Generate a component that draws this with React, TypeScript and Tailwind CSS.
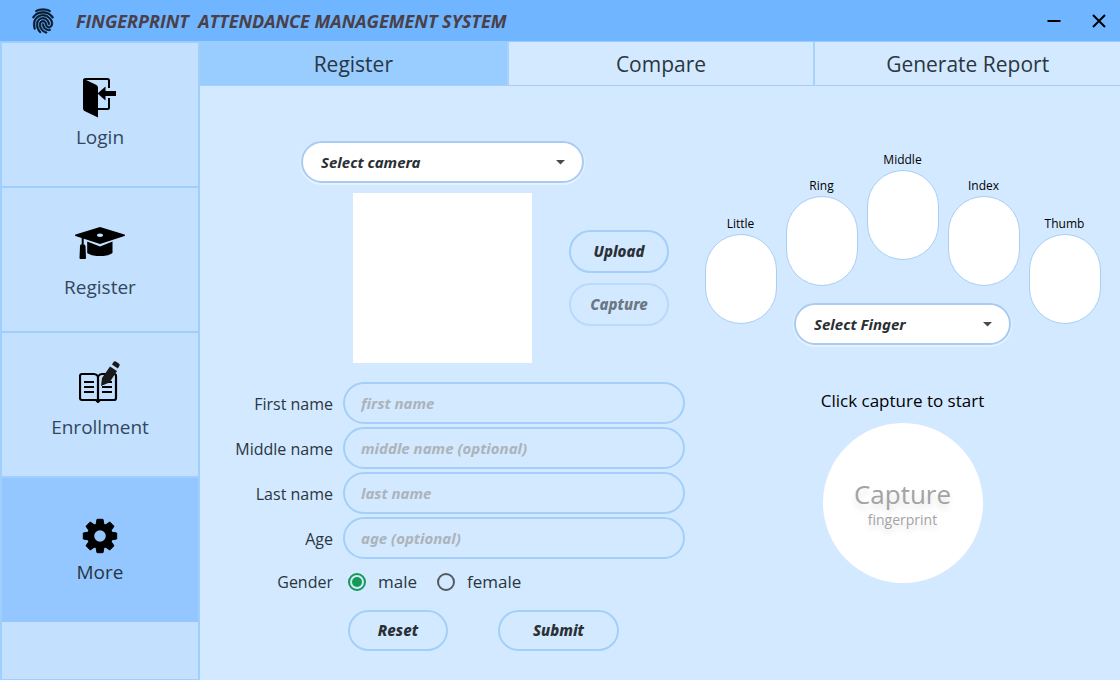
import { useState, type ReactNode } from "react";
import { IoMdFingerPrint } from "react-icons/io";

function DoorIcon() {
  return (
    <svg width="34" height="40" viewBox="0 0 34 40" aria-hidden="true">
      <path d="M1 2.5 Q1 1 2.5 1 H24.5 Q26 1 26 2.5 V10 M26 20 V29.5 Q26 31 24.5 31 H15" fill="none" stroke="#000" strokeWidth="2" />
      <path d="M0 2.5 Q0 .5 2 1.5 L13.5 7 Q15 8 15 9.500 V39.500 L1.500 33 Q0 32 0 30.500 Z" />
      <path d="M14.500 15.500 L22.500 8.500 V13 H33 V18 H22.500 V22.500 Z" />
    </svg>
  );
}

function CapIcon() {
  return (
    <svg width="50" height="33" viewBox="0 0 50 33" aria-hidden="true">
      <path fillRule="evenodd" d="M25 0 L49.500 7.600 Q50.500 8.300 49.500 9 L25 17 L.5 9 Q-.5 8.300 .5 7.600 Z M25 6.600 C21 6.600 21 10 25 10 S29 6.600 25 6.600 Z" />
      <path d="M12.200 14.500 L25 19.500 L37.500 14.500 V26 Q34 29 25 29 T12.200 26 Z" />
      <path d="M6.700 9 H8.700 V17 H6.700 Z M5 19 Q5 17 7.500 17 T10.500 19 L11 31 Q11 32 10 32 H5.500 Q4.500 32 4.500 31 Z" />
    </svg>
  );
}

function BookIcon() {
  return (
    <svg width="42" height="42" viewBox="0 0 42 42" aria-hidden="true">
      <g fill="none" stroke="#000" strokeWidth="2.200">
        <path d="M19 15.500 Q17.500 13 15 13 H3 Q1 13 1 15 V37 Q1 39 3 39 H17 L19 41 L21 39 H35 Q37 39 37 37 V15 Q37 13 35 13 H23 Q20.500 13 19 15.500 V40" />
        <path d="M5 21 H15 M5 26 H15 M5 31 H15 M23 21 H33 M23 26 H33 M23 31 H33" />
      </g>
      <path d="M22 25 L23 17 L31 5.500 L38 10 L30.500 21.500 Z" fill="#1a1a1a" />
      <path d="M33 3.500 L34.500 1 Q35.500 -.3 36.800 .5 L39.800 2.500 Q41.300 3.500 40.300 5 L38.800 7.400 Z" fill="#1a1a1a" />
    </svg>
  );
}

function GearIcon() {
  return (
    <svg width="36" height="36" viewBox="-18 -18 36 36" aria-hidden="true">
      <circle r="9.300" fill="none" stroke="#000" strokeWidth="7" />
      <g strokeLinejoin="round" stroke="#000" strokeWidth="1">
        <path d="M-4 -11 L-3 -16.700 H3 L4 -11 Z" />
        <path d="M-4 -11 L-3 -16.700 H3 L4 -11 Z" transform="rotate(45)" />
        <path d="M-4 -11 L-3 -16.700 H3 L4 -11 Z" transform="rotate(90)" />
        <path d="M-4 -11 L-3 -16.700 H3 L4 -11 Z" transform="rotate(135)" />
        <path d="M-4 -11 L-3 -16.700 H3 L4 -11 Z" transform="rotate(180)" />
        <path d="M-4 -11 L-3 -16.700 H3 L4 -11 Z" transform="rotate(225)" />
        <path d="M-4 -11 L-3 -16.700 H3 L4 -11 Z" transform="rotate(270)" />
        <path d="M-4 -11 L-3 -16.700 H3 L4 -11 Z" transform="rotate(315)" />
      </g>
    </svg>
  );
}

const navItems: { label: string; icon: ReactNode; box: string; active?: boolean }[] = [
  { label: "Login", icon: <DoorIcon />, box: "h-20 pb-[5px]" },
  { label: "Register", icon: <CapIcon />, box: "h-[85px] pb-[13px]" },
  { label: "Enrollment", icon: <BookIcon />, box: "h-20 pb-[10px]" },
  { label: "More", icon: <GearIcon />, box: "h-20 pb-1", active: true },
];

const tabs = ["Register", "Compare", "Generate Report"];

const fingers = [
  { name: "Little", offset: "mt-16" },
  { name: "Ring", offset: "mt-[26px]" },
  { name: "Middle", offset: "mt-0" },
  { name: "Index", offset: "mt-[26px]" },
  { name: "Thumb", offset: "mt-16" },
];

const fields = [
  { id: "first", label: "First name", placeholder: "first name" },
  { id: "middle", label: "Middle name", placeholder: "middle name (optional)" },
  { id: "last", label: "Last name", placeholder: "last name" },
  { id: "age", label: "Age", placeholder: "age (optional)" },
];

function PillSelect({ label, width }: { label: string; width: string }) {
  return (
    <div className={`relative ${width}`}>
      <select
        aria-label={label}
        className="h-[42px] w-full appearance-none rounded-full border-2 border-[#a9cbf3] bg-white pr-10 pl-[18px] font-['Noto_Sans',sans-serif] text-[15px] font-bold text-[#2b2f33] italic shadow-[0_1px_1px_1px_#e6f3ff]"
      >
        <option>{label}</option>
      </select>
      <svg className="pointer-events-none absolute top-[19px] right-[19px]" width="9" height="5" viewBox="0 0 9 5" aria-hidden="true">
        <path d="M0 0 H9 L4.500 4.500 Z" fill="#4a4a4a" />
      </svg>
    </div>
  );
}

function PillButton({ children, className, disabled, type = "button" }: { children: string; className: string; disabled?: boolean; type?: "button" | "submit" | "reset" }) {
  return (
    <button
      type={type}
      disabled={disabled}
      className={`rounded-full border-2 border-[#a3cffa] font-['Noto_Sans',sans-serif] text-[15px] font-extrabold text-[#2b3036] italic disabled:border-[#b9dafb] disabled:text-[#6b7784] ${className}`}
    >
      {children}
    </button>
  );
}

export default function App() {
  const [gender, setGender] = useState("male");

  return (
    <div className="flex min-h-screen flex-col bg-[#d3e9ff] font-['Open_Sans','Noto_Sans',sans-serif] text-[#2b3640]">
      <header className="flex h-[42px] items-center border-b border-[#9acbff] bg-[#6fb5ff] pr-[13px] pl-[29px]">
        <IoMdFingerPrint className="size-7 text-[#06182c] [&_path]:stroke-[#06182c] [&_path]:[stroke-width:12]" />
        <h1 className="ml-[19px] text-lg font-bold whitespace-pre text-[#4b4048] italic">{"FINGERPRINT  ATTENDANCE MANAGEMENT SYSTEM"}</h1>
        <div className="ml-auto flex items-center gap-[29px]">
          <button type="button" aria-label="Minimize">
            <svg width="16" height="16" viewBox="0 0 16 16" aria-hidden="true">
              <path d="M1.500 8 H14.500" stroke="#000" strokeWidth="2" />
            </svg>
          </button>
          <button type="button" aria-label="Close">
            <svg width="16" height="16" viewBox="0 0 16 16" aria-hidden="true">
              <path d="M2 2 L14 14 M14 2 L2 14" stroke="#000" strokeWidth="2" />
            </svg>
          </button>
        </div>
      </header>

      <div className="flex flex-1">
        <nav className="w-[200px] shrink-0 border-x-2 border-y border-[#a0cffc] bg-[#c3e0ff]">
          {navItems.map((item) => (
            <a
              key={item.label}
              href={`#${item.label.toLowerCase()}`}
              className={`flex flex-col items-center ${item.active ? "h-36 bg-[#94c7ff] text-[#263542]" : "h-[145px] border-b-2 border-[#a0cffc] text-[#33475c]"}`}
            >
              <span className={`flex shrink-0 items-end ${item.box}`}>{item.icon}</span>
              <span className="text-[19px] leading-7">{item.label}</span>
            </a>
          ))}
        </nav>

        <div className="flex min-w-0 flex-1 flex-col">
          <div role="tablist" className="grid h-11 grid-cols-3">
            {tabs.map((tab, i) => (
              <button
                key={tab}
                type="button"
                role="tab"
                aria-selected={i === 0}
                className="border-b border-l-2 border-[#a8d2fb] border-b-[#a8cdf8] pt-0.5 text-[21px] first:border-l-0 aria-selected:bg-[#99ccff]"
              >
                {tab}
              </button>
            ))}
          </div>

          <main className="flex flex-1">
            <section className="w-[485px] shrink-0 pt-[55px]">
              <div className="ml-[101px]">
                <PillSelect label="Select camera" width="w-[283px]" />
              </div>
              <div className="mt-[10px] ml-[153px] flex items-start gap-[37px]">
                <div className="h-[170px] w-[179px] bg-white" />
                <div className="mt-[37px] flex flex-col gap-[10px]">
                  <PillButton className="h-[43px] w-[100px]">Upload</PillButton>
                  <PillButton className="h-[43px] w-[100px]" disabled>
                    Capture
                  </PillButton>
                </div>
              </div>

              <form className="mt-[19px]" onSubmit={(e) => e.preventDefault()}>
                <div className="flex flex-col gap-[3px]">
                  {fields.map((f) => (
                    <div key={f.id} className="flex items-center gap-[10px]">
                      <label htmlFor={f.id} className="w-[133px] pt-0.5 text-right text-base">
                        {f.label}
                      </label>
                      <input
                        id={f.id}
                        placeholder={f.placeholder}
                        className="h-[42px] min-w-0 flex-1 rounded-full border-2 border-[#a3cffa] px-4 font-['Noto_Sans',sans-serif] text-[15px] font-bold italic placeholder:text-[#adb3ba]"
                      />
                    </div>
                  ))}
                </div>
                <div role="radiogroup" aria-labelledby="gender-label" className="mt-[10px] flex h-[26px] items-center">
                  <span id="gender-label" className="w-[133px] text-right text-base">
                    Gender
                  </span>
                  {["male", "female"].map((g) => (
                    <label key={g} className="ml-[15px] flex items-center gap-3 text-[17px] not-last:mr-[5px]">
                      <input
                        type="radio"
                        name="gender"
                        checked={gender === g}
                        onChange={() => setGender(g)}
                        className="size-[18px] appearance-none rounded-full border-2 border-[#555b61] checked:border-[#159a55] checked:bg-[#159a55] checked:bg-clip-content checked:p-[2px]"
                      />
                      {g}
                    </label>
                  ))}
                </div>
                <div className="mt-[15px] ml-[148px] flex gap-[50px]">
                  <PillButton type="reset" className="h-[41px] w-[100px]">
                    Reset
                  </PillButton>
                  <PillButton type="submit" className="h-[41px] w-[121px]">
                    Submit
                  </PillButton>
                </div>
              </form>
            </section>

            <section className="flex flex-1 flex-col items-center pt-16 text-black">
              <div className="flex items-start gap-[9px]">
                {fingers.map((f) => (
                  <div key={f.name} className={`flex flex-col items-center ${f.offset}`}>
                    <span className="text-xs leading-5">{f.name}</span>
                    <div className="h-[90px] w-[72px] rounded-full border border-[#a9cef5] bg-white" />
                  </div>
                ))}
              </div>
              <div className="-mt-[21px]">
                <PillSelect label="Select Finger" width="w-[217px]" />
              </div>
              <p className="mt-11 text-[17px] leading-6">Click capture to start</p>
              <button
                type="button"
                className="mt-[10px] flex size-40 flex-col items-center justify-center rounded-full bg-white pt-0.5 text-[#a3a3a3] [text-shadow:0_5px_6px_rgba(0,0,0,0.12)]"
              >
                <span className="text-[26px] leading-8">Capture</span>
                <span className="text-[14px] leading-5">fingerprint</span>
              </button>
            </section>
          </main>
        </div>
      </div>
    </div>
  );
}
